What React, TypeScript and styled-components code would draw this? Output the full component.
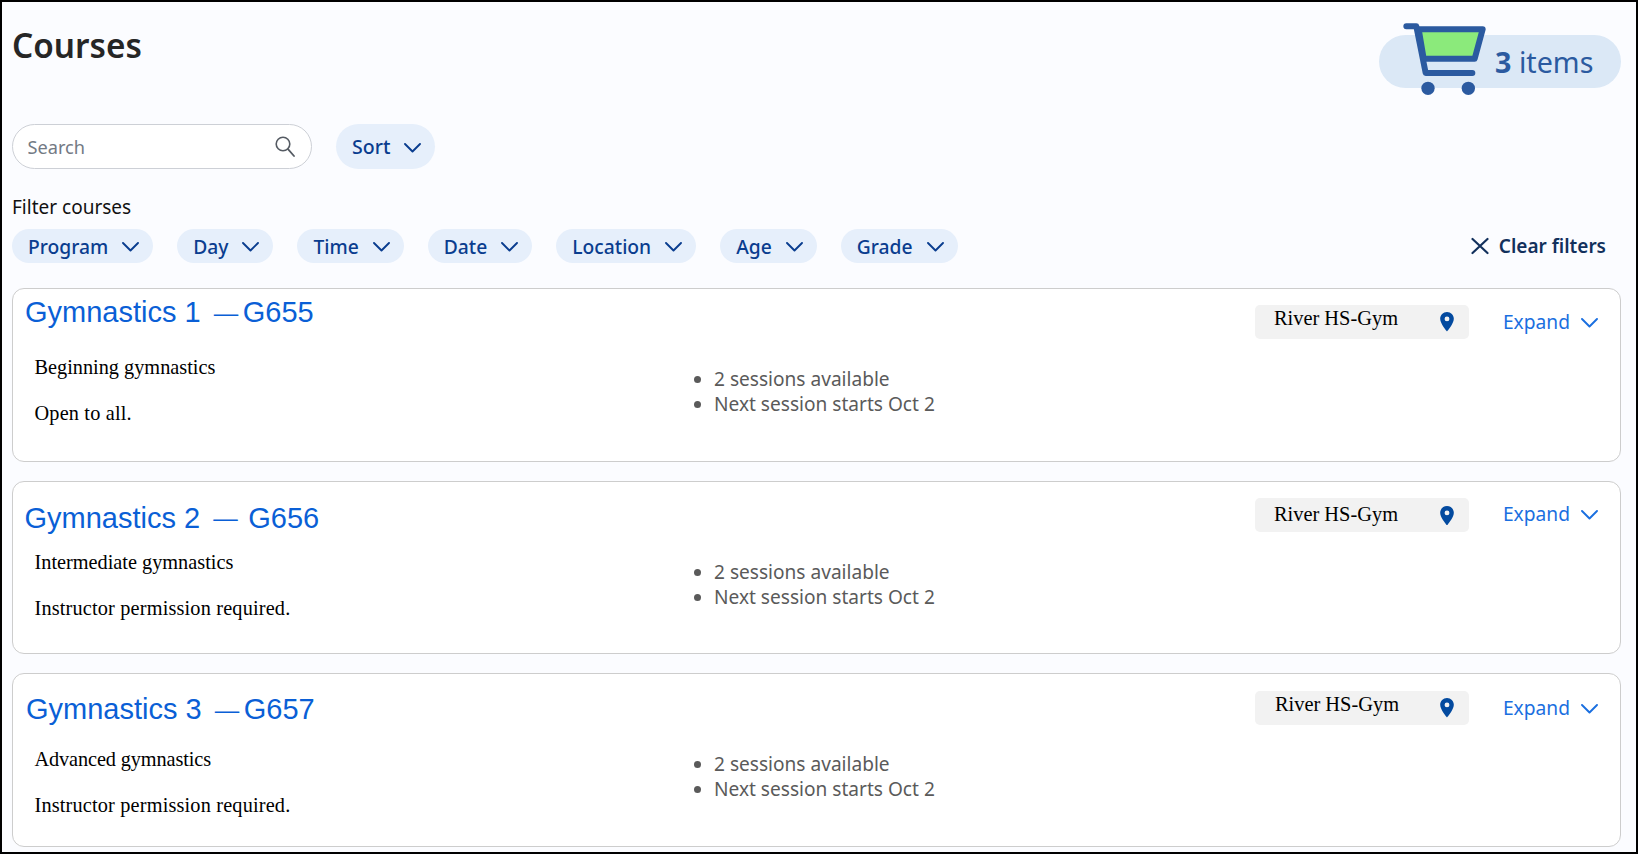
import React from "react";
import styled, { createGlobalStyle } from "styled-components";

const Global = createGlobalStyle`
  html, body { margin: 0; padding: 0; background: #fbfcff; }
  * { box-sizing: border-box; }
`;

const Page = styled.main`
  width: 1638px;
  height: 854px;
  border: 2px solid #000;
  background: #fbfcff;
  padding: 0 15px 0 10px;
  font-family: "Noto Sans", sans-serif;
  overflow: hidden;
`;

const Header = styled.header`
  display: flex;
  justify-content: space-between;
  align-items: flex-start;
  height: 122px;
`;

const Title = styled.h1`
  margin: 21px 0 0;
  font-size: 33.3px;
  line-height: 44px;
  font-weight: 600;
  color: #262626;
`;

const CartPill = styled.div`
  position: relative;
  width: 242px;
  height: 53px;
  margin: 33px 0 0 0;
  padding-left: 116px;
  border-radius: 27px;
  background: #dbe8f6;
  color: #2b5aa0;
  font-size: 28.7px;
  line-height: 53px;
  white-space: nowrap;
`;

const CartCount = styled.b`
  font-weight: 700;
`;

const CartIcon = styled.svg`
  position: absolute;
  left: 23px;
  top: -13px;
  width: 85px;
  height: 75px;
`;

const SearchRow = styled.div`
  display: flex;
  gap: 24px;
`;

const SearchBox = styled.label`
  display: flex;
  align-items: center;
  width: 300px;
  height: 45px;
  padding: 0 16px 0 14.5px;
  background: #fff;
  border: 1px solid #cdd0d6;
  border-radius: 23px;
`;

const SearchInput = styled.input`
  flex: 1;
  min-width: 0;
  border: 0;
  outline: 0;
  background: transparent;
  padding: 0;
  font: 18.2px "Noto Sans", sans-serif;
  color: #333;
  &::placeholder { color: #737a84; opacity: 1; }
`;

const FilterLabel = styled.div`
  height: 60px;
  padding-top: 25px;
  font-size: 19px;
  line-height: 26px;
  color: #111;
`;

const FilterRow = styled.div`
  display: flex;
  align-items: center;
  gap: 24px;
  height: 34px;
  margin-bottom: 25px;
`;

const Pill = styled.button<{ $tall?: boolean }>`
  display: inline-flex;
  align-items: center;
  gap: 14px;
  height: ${(p) => (p.$tall ? 45 : 34)}px;
  padding: 0 14px 0 16px;
  border: 0;
  border-radius: 23px;
  background: #e6effb;
  color: #0a3d8f;
  font: 500 ${(p) => (p.$tall ? 19.5 : 19.25)}px "Noto Sans", sans-serif;
`;

const ClearButton = styled.button`
  display: inline-flex;
  align-items: center;
  gap: 10px;
  margin: 0 15px 0 auto;
  padding: 0;
  border: 0;
  background: transparent;
  color: #12305c;
  font: 600 19px "Noto Sans", sans-serif;
`;

const CardList = styled.div`
  display: flex;
  flex-direction: column;
  gap: 19px;
`;

const Card = styled.article`
  display: flex;
  height: 173.5px;
  padding: 0 22px 0 0;
  background: #fff;
  border: 1px solid #cdcdcd;
  border-radius: 12px;
`;

const CardMain = styled.div`
  flex: 0 0 655px;
`;

const CardTitle = styled.h2<{ $top: number; $left: number }>`
  margin: ${(p) => p.$top}px 0 0 ${(p) => p.$left}px;
  font: 400 29px/34px "Liberation Sans", Arial, sans-serif;
  color: #0a5fd6;
  white-space: pre;
`;

const TitleDash = styled.span<{ $left: number; $right: number }>`
  margin: 0 ${(p) => p.$right}px 0 ${(p) => p.$left}px;
  font-size: 24.5px;
  line-height: 0;
  vertical-align: 1.5px;
`;

const Description = styled.p<{ $top: number; $track: number }>`
  margin: ${(p) => p.$top}px 0 0 21.5px;
  font: 20.3px/23px "Liberation Serif", "Times New Roman", serif;
  letter-spacing: ${(p) => p.$track}px;
  color: #000;
`;

const Sessions = styled.ul`
  flex: 1;
  margin: 0;
  padding: 78px 0 0 46px;
  font-size: 19.1px;
  line-height: 25px;
  color: #5a5a5a;
`;

const CardSide = styled.div<{ $top: number }>`
  display: flex;
  align-items: flex-start;
  gap: 34px;
  margin-top: ${(p) => p.$top}px;
`;

const LocationTag = styled.div<{ $left: number; $top: number }>`
  display: flex;
  justify-content: space-between;
  width: 214px;
  height: 34px;
  padding: ${(p) => p.$top}px 15px 0 ${(p) => p.$left}px;
  background: #f2f2f2;
  border-radius: 5px;
  font: 20.4px/23px "Liberation Serif", "Times New Roman", serif;
  color: #000;
`;

const PinIcon = styled.svg<{ $top: number }>`
  width: 14px;
  height: 19.5px;
  margin-top: ${(p) => p.$top}px;
`;

const ExpandButton = styled.button<{ $top: number }>`
  display: inline-flex;
  align-items: center;
  gap: 11px;
  margin-top: ${(p) => p.$top}px;
  padding: 0;
  border: 0;
  background: transparent;
  color: #1a6fe0;
  font: 400 19.2px/26px "Noto Sans", sans-serif;
`;

const ChevronIcon = styled.svg`
  flex: none;
  margin-top: 2px;
`;

const Chevron = () => (
  <ChevronIcon width="17" height="10" viewBox="0 0 17 10" fill="none" aria-hidden="true">
    <polyline points="1,1 8.5,8.5 16,1" stroke="currentColor" strokeWidth="1.9" strokeLinecap="round" strokeLinejoin="round" />
  </ChevronIcon>
);

const filters = ["Program", "Day", "Time", "Date", "Location", "Age", "Grade"];

const courses = [
  { name: "Gymnastics 1", code: "G655", dashL: 5, dashR: 4.5, tTop: 6, tLeft: 12, dTop: 27, lines: ["Beginning gymnastics", "Open to all."], tracks: [0, 0.17], side: 16, locLeft: 19, locTop: 2, pin: 5, exp: 4 },
  { name: "Gymnastics 2", code: "G656", dashL: 5, dashR: 10.5, tTop: 19, tLeft: 11.5, dTop: 16, lines: ["Intermediate gymnastics", "Instructor permission required."], tracks: [0, 0.17], side: 16, locLeft: 19, locTop: 5, pin: 3, exp: 3 },
  { name: "Gymnastics 3", code: "G657", dashL: 5, dashR: 4.5, tTop: 18, tLeft: 13, dTop: 22, lines: ["Advanced gymnastics", "Instructor permission required."], tracks: [-0.11, 0.17], side: 17, locLeft: 20, locTop: 2, pin: 5, exp: 4 },
];

export default function App() {
  return (
    <Page>
      <Global />
      <Header>
        <Title>Courses</Title>
        <CartPill>
          <CartIcon viewBox="185 65 255 225" aria-hidden="true">
            <path d="M235 87 H427 L403 175 H250 Z" fill="#8bea7b" stroke="#2b5aa0" strokeWidth="18" strokeLinejoin="round" />
            <path d="M198 78 H228 L256 218 H396" fill="none" stroke="#2b5aa0" strokeWidth="18" strokeLinecap="round" strokeLinejoin="round" />
            <circle cx="263" cy="264" r="20" fill="#2b5aa0" />
            <circle cx="384" cy="264" r="20" fill="#2b5aa0" />
          </CartIcon>
          <CartCount>3</CartCount> items
        </CartPill>
      </Header>
      <SearchRow>
        <SearchBox>
          <SearchInput placeholder="Search" />
          <svg width="20" height="21" viewBox="0 0 20 21" fill="none" aria-hidden="true">
            <circle cx="8" cy="8" r="6.8" stroke="#555b63" strokeWidth="1.6" />
            <line x1="13" y1="13.2" x2="19" y2="20" stroke="#555b63" strokeWidth="1.8" strokeLinecap="round" />
          </svg>
        </SearchBox>
        <Pill $tall>
          Sort
          <Chevron />
        </Pill>
      </SearchRow>
      <FilterLabel>Filter courses</FilterLabel>
      <FilterRow>
        {filters.map((f) => (
          <Pill key={f}>
            {f}
            <Chevron />
          </Pill>
        ))}
        <ClearButton>
          <svg width="18" height="18" viewBox="0 0 18 18" fill="none" aria-hidden="true">
            <path d="M1.5 2 L16.5 16 M16.5 2 L1.5 16" stroke="#12305c" strokeWidth="2.2" strokeLinecap="round" />
          </svg>
          Clear filters
        </ClearButton>
      </FilterRow>
      <CardList>
        {courses.map((c) => (
          <Card key={c.name}>
            <CardMain>
              <CardTitle $top={c.tTop} $left={c.tLeft}>
                {c.name} <TitleDash $left={c.dashL} $right={c.dashR}>—</TitleDash>{c.code}
              </CardTitle>
              <Description $top={c.dTop} $track={c.tracks[0]}>{c.lines[0]}</Description>
              <Description $top={23} $track={c.tracks[1]}>{c.lines[1]}</Description>
            </CardMain>
            <Sessions>
              <li>2 sessions available</li>
              <li>Next session starts Oct 2</li>
            </Sessions>
            <CardSide $top={c.side}>
              <LocationTag $left={c.locLeft} $top={c.locTop}>
                River HS-Gym
                <PinIcon $top={c.pin} viewBox="0 0 14 20" aria-hidden="true">
                  <path fillRule="evenodd" fill="#034a9f" d="M7 0 C3.1 0 0 3.1 0 7 C0 12 7 20 7 20 C7 20 14 12 14 7 C14 3.1 10.9 0 7 0 Z M7 4.6 A2.5 2.5 0 1 1 7 9.6 A2.5 2.5 0 1 1 7 4.6 Z" />
                </PinIcon>
              </LocationTag>
              <ExpandButton $top={c.exp}>
                Expand
                <Chevron />
              </ExpandButton>
            </CardSide>
          </Card>
        ))}
      </CardList>
    </Page>
  );
}
